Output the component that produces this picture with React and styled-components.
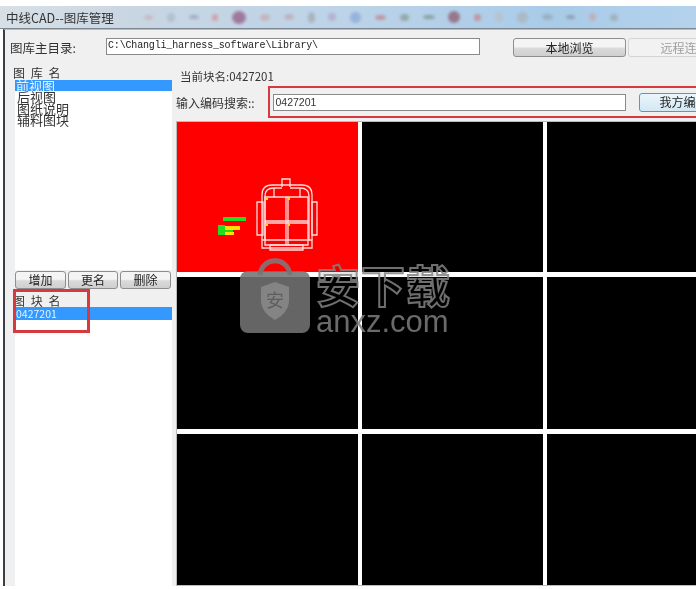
import React from "react";
import styled, { createGlobalStyle } from "styled-components";

const Global = createGlobalStyle`
  html, body { margin: 0; padding: 0; background: #fff; }
  #root { width: 696px; height: 589px; overflow: hidden; position: relative; }
  * { box-sizing: border-box; }
`;
const cjk = `"Noto Sans CJK SC", "Liberation Sans", sans-serif`;
const Screen = styled.div`
  position: relative; width: 696px; height: 589px; padding-top: 6px; overflow: hidden;
  background: #fff; font-family: ${cjk}; font-size: 12px; color: #222;
  filter: blur(0.4px);
`;
const TitleBar = styled.div`
  height: 23px; display: flex; align-items: center; padding-left: 6px; gap: 30px; overflow: hidden;
  background: linear-gradient(90deg, #d8e0e6 0%, #c8d6e2 20%, #bcd3e8 50%, #a9cbe8 80%, #b4d2ec 100%);
  border-bottom: 1px solid #7d8792;
`;
const Title = styled.span`font-size: 12.5px; color: #333; white-space: nowrap; width: 108px; flex: none;`;
const GhostIcons = styled.div`display: flex; align-items: center; gap: 13.8px; filter: blur(1.8px); opacity: .55;`;
const Ghost = styled.i`display: block; flex: none; width: ${p => p.$w || 8}px; height: ${p => p.$h || 7}px; border-radius: 50%; background: ${p => p.$c};`;
const Window = styled.div`
  width: 720px; height: 557px; margin-left: 3px; background: #f0f0f0;
  border-left: 2px solid #3a3f45; border-top: 1px solid #b8bcc0; display: flex; flex-direction: column;
`;
const TopRow = styled.div`display: flex; height: 39px; padding: 8px 0 0 5px; align-items: flex-start; flex: none;`;
const RootLabel = styled.label`width: 96px; flex: none; font-size: 12.5px; line-height: 14px; padding-top: 3px; white-space: nowrap; color: #333;`;
const PathInput = styled.div`
  width: 374px; height: 17px; flex: none; background: #fff; border: 1px solid #8a8a8a; padding-left: 1px;
  font: 10px/14px "Liberation Mono", monospace; letter-spacing: -.17px; white-space: nowrap; color: #222;
`;
const Btn = styled.button`
  font-family: ${cjk}; font-size: 12px; padding: 0; height: ${p => p.$h || 19}px; width: ${p => p.$w}px; flex: none;
  border-radius: 3px; line-height: 1; color: ${p => p.disabled ? "#a0a0a0" : "#222"};
  border: 1px solid ${p => p.disabled ? "#d4d4d4" : p.$focus ? "#4d9ccc" : "#8e8e8e"};
  background: ${p => p.disabled ? "#f2f2f2" : p.$focus ? "linear-gradient(#eaf6fc,#d4e7f2)" : "linear-gradient(#f4f4f4 45%,#dadada 55%,#cfcfcf)"};
  white-space: nowrap; overflow: hidden;
`;
const TopButtons = styled.div`display: flex; gap: 2px; margin-left: 33px; flex: none;`;
const Main = styled.div`flex: 1; display: flex; min-height: 0;`;
const Side = styled.aside`width: 167px; padding-left: 10px; flex: none; display: flex; flex-direction: column;`;
const SpacedLabel = styled.div`font-size: 12px; line-height: 11px; letter-spacing: 1.5px; margin: ${p => p.$mt || 0}px 0 0 -2px; height: ${p => p.$h}px; color: #333; white-space: pre;`;
const List = styled.ul`
  list-style: none; margin: 0; padding: 0; background: #fff; flex: ${p => p.$grow ? 1 : "none"}; height: ${p => p.$height ? p.$height + "px" : "auto"};
`;
const Item = styled.li`
  height: ${p => p.$h || 11.4}px; font-size: ${p => p.$small ? 10.5 : 13}px; line-height: ${p => p.$small ? 13 : 11.4}px; padding-left: ${p => p.$sel ? 1 : 2}px; white-space: nowrap; color: #333;
  ${p => p.$sel && "background:#3399ff;color:#e6f2ff;"}
`;
const MiniBar = styled.div`display: flex; gap: 2px; height: 18px; margin-top: 1px; margin-bottom: 6px; flex: none;`;
const Content = styled.section`flex: 1; min-width: 0; display: flex; flex-direction: column; padding-left: 5px;`;
const Current = styled.div`font-size: 11.5px; height: 15px; line-height: 14px; padding-left: 3px; color: #333; white-space: nowrap;`;
const SearchRow = styled.div`display: flex; height: 32px; align-items: center; margin-top: 2px; flex: none; margin-left: -1px;`;
const SearchLabel = styled.label`width: 92px; flex: none; font-size: 12px; color: #333; white-space: nowrap;`;
const Highlight = styled.div`
  display: flex; align-items: center; gap: 13px; width: 450px; height: 32px; flex: none; padding-left: 2.5px;
  border: 2.5px solid #d8393e; border-right: 0;
`;
const SearchInput = styled.div`
  width: 353px; height: 17px; flex: none; background: #fff; border: 1px solid #8a8a8a; padding-left: 2px;
  font: 10.5px/14px "Liberation Sans", sans-serif; color: #333;
`;
const Grid = styled.div`
  display: grid; grid-template-columns: 181px 181px 181px; grid-template-rows: 150px 152px 151px; gap: 5px 4px;
  margin-top: 4px; width: 560px; background: #fff; flex: none;
  box-shadow: 0 0 0 1px #bbb;
`;
const Cell = styled.div`position: relative; background: ${p => p.$red ? "#ff0000" : "#000"}; overflow: hidden;`;
const Drawing = styled.svg`display: block; width: 181px; height: 150px;`;
const Note = styled.div`
  position: absolute; left: 13px; top: 289px; width: 77px; height: 44px; border: 3px solid #d8393e; pointer-events: none;
`;
const Mark = styled.div`position: absolute; left: 240px; top: 253px; display: flex; gap: 6px; pointer-events: none;`;
const MarkText = styled.div`display: flex; flex-direction: column; width: 140px; padding-top: 7px;`;
const MarkCn = styled.div`
  font: 700 44px/48px ${cjk}; letter-spacing: 1px; color: rgba(0,0,0,.1); -webkit-text-stroke: 2px rgba(130,130,130,.85); white-space: nowrap;
`;
const MarkEn = styled.div`font: 400 31px/28px "Liberation Sans", sans-serif; color: rgba(125,125,125,.85); white-space: nowrap;`;

const ghosts = [
  ["#c9a0b0", 9, 5], ["#9db0c0", 8, 9], ["#88a", 10, 4], ["#d77", 6, 7], ["#803060", 14, 13], ["#c99", 10, 7], ["#b99", 10, 6], ["#999", 7, 11],
  ["#a9b", 8, 8], ["#7a9ad0", 11, 11], ["#b66", 11, 5], ["#787", 9, 7], ["#676", 12, 4], ["#803040", 12, 12], ["#c66", 7, 7], ["#bbb", 8, 10],
  ["#aaa", 11, 11], ["#89a", 11, 6], ["#778", 9, 4], ["#c99", 7, 8], ["#999", 8, 7]
];

export default function App() {
  return (
    <Screen>
      <Global />
      <TitleBar>
        <Title>中线CAD--图库管理</Title>
        <GhostIcons>{ghosts.map(([c, w, h], i) => <Ghost key={i} $c={c} $w={w} $h={h} />)}</GhostIcons>
      </TitleBar>
      <Window>
        <TopRow>
          <RootLabel>图库主目录:</RootLabel>
          <PathInput>C:\Changli_harness_software\Library\</PathInput>
          <TopButtons>
            <Btn $w={113}>本地浏览</Btn>
            <Btn $w={113} disabled>远程连接</Btn>
          </TopButtons>
        </TopRow>
        <Main>
          <Side>
            <SpacedLabel $h={13} $mt={-2}>图 库 名</SpacedLabel>
            <List $height={190}>
              <Item $sel>前视图</Item>
              <Item>后视图</Item>
              <Item>图纸说明</Item>
              <Item>辅料图块</Item>
            </List>
            <MiniBar>
              <Btn $w={51} $h={18}>增加</Btn>
              <Btn $w={50} $h={18}>更名</Btn>
              <Btn $w={51} $h={18}>删除</Btn>
            </MiniBar>
            <SpacedLabel $h={12}>图 块 名</SpacedLabel>
            <List $grow>
              <Item $sel $small $h={13}>0427201</Item>
            </List>
          </Side>
          <Content>
            <Current>当前块名:0427201</Current>
            <SearchRow>
              <SearchLabel>输入编码搜索::</SearchLabel>
              <Highlight>
                <SearchInput>0427201</SearchInput>
                <Btn $w={90} $focus>我方编码</Btn>
              </Highlight>
            </SearchRow>
            <Grid>
              <Cell $red>
                <Drawing viewBox="177 122 181 150">
                  <g fill="none" stroke="#ffdcdc" strokeWidth="1.3">
                    <path d="M282 187V179H290V187" />
                    <path d="M262 240V195Q262 185 272 185H302Q312 185 312 195V240" />
                    <path d="M265 240V196Q265 188 274 188H282M290 188H300Q309 188 309 196V240" />
                    <path d="M262 240V248H312V240Z M270 245H303V250H270Z" />
                    <path d="M265 197H308V245H265Z" />
                    <path d="M286 197V245M288 197V245M265 221H308M265 223H308" />
                    <path d="M257 202H263V235H257Z M312 202H317V235H312Z" />
                    <path d="M274 188V197M300 188V197" />
                  </g>
                  <g fill="#ffe000">
                    <rect x="266" y="198" width="2" height="2" />
                    <rect x="288" y="198" width="2" height="2" />
                    <rect x="266" y="224" width="2" height="2" />
                    <rect x="288" y="224" width="2" height="2" />
                    <rect x="225" y="226" width="15" height="4" />
                    <rect x="225" y="232" width="9" height="3" />
                  </g>
                  <g fill="#22dd22">
                    <rect x="223" y="217" width="23" height="4" />
                    <rect x="218" y="225" width="7" height="10" />
                    <rect x="225" y="230" width="8" height="2" />
                  </g>
                </Drawing>
              </Cell>
              {Array.from({ length: 8 }, (_, i) => <Cell key={i} />)}
            </Grid>
          </Content>
        </Main>
      </Window>
      <Note />
      <Mark>
        <svg width="70" height="80" viewBox="0 0 70 80">
          <path d="M20 22C22 3 48 3 50 22" fill="none" stroke="rgba(125,125,125,.85)" strokeWidth="5" />
          <rect x="0" y="18" width="70" height="62" rx="8" fill="rgba(115,115,115,.88)" />
          <path d="M21 34L35 29L49 34V49Q48 60 35 67Q22 60 21 49Z" fill="rgba(140,140,140,.8)" />
          <text x="35" y="54" textAnchor="middle" fontSize="18" fontFamily={cjk} fill="rgba(90,90,90,.9)">安</text>
        </svg>
        <MarkText>
          <MarkCn>安下载</MarkCn>
          <MarkEn>anxz.com</MarkEn>
        </MarkText>
      </Mark>
    </Screen>
  );
}
